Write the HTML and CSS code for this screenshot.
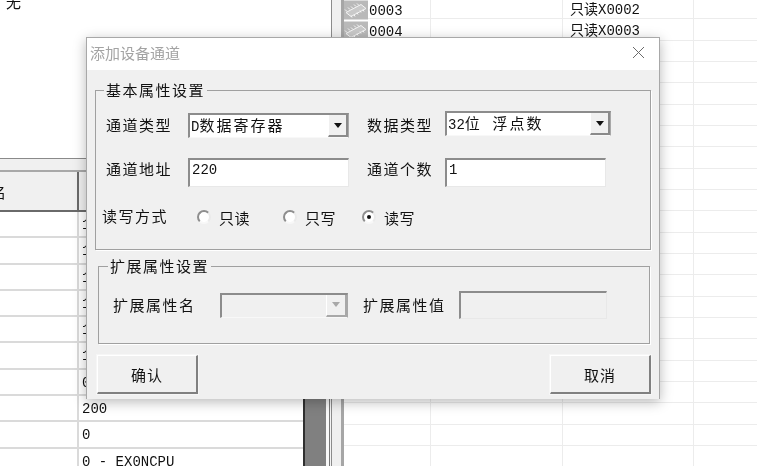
FILE: index.html
```html
<!DOCTYPE html>
<html lang="zh-CN">
<head>
<meta charset="utf-8">
<title>添加设备通道</title>
<link rel="stylesheet" href="styles.css">
</head>
<body>
<svg class="defs" width="0" height="0"><symbol id="chip" viewBox="0 0 24 19"><rect width="24" height="19" fill="#b9b9b9"/><path d="M2 12 17 4l5 4-15 8z" fill="#c9c9c9" stroke="#f4f4f4"/><path d="M1 9l2 2M4 7l2 2M7 6l2 2M10 4l2 2M13 3l2 2M8 17l-1-2M11 16l-1-2M14 14l-1-2M17 12l-1-2M20 11l-1-2" stroke="#f7f7f7" stroke-width="1" fill="none"/></symbol></svg>
<div class="app">
  <div class="left">
    <div class="top"><span class="top-text">无</span></div>
    <div class="bar"></div>
    <div class="lower">
      <div class="table">
        <div class="thead"><span class="th">名</span><span class="th-rest"></span></div>
        <div class="tr"><span class="td-a"></span><span class="td-b">1</span></div>
        <div class="tr"><span class="td-a"></span><span class="td-b">1</span></div>
        <div class="tr"><span class="td-a"></span><span class="td-b">1</span></div>
        <div class="tr"><span class="td-a"></span><span class="td-b">1</span></div>
        <div class="tr"><span class="td-a"></span><span class="td-b">1</span></div>
        <div class="tr"><span class="td-a"></span><span class="td-b">1</span></div>
        <div class="tr"><span class="td-a"></span><span class="td-b">0</span></div>
        <div class="tr"><span class="td-a"></span><span class="td-b">200</span></div>
        <div class="tr"><span class="td-a"></span><span class="td-b">0</span></div>
        <div class="tr"><span class="td-a"></span><span class="td-b">0 - EX0NCPU</span></div>
      </div>
      <div class="track"></div>
      <div class="track-edge"></div>
    </div>
  </div>
  <div class="divider"></div>
  <div class="right">
    <div class="row"><span class="c1"><svg class="chip"><use href="#chip"/></svg><span class="id">0003</span></span><span class="c2"></span><span class="c3">只读X0002</span><span class="c4"></span></div>
    <div class="row"><span class="c1"><svg class="chip"><use href="#chip"/></svg><span class="id">0004</span></span><span class="c2"></span><span class="c3">只读X0003</span><span class="c4"></span></div>
    <div class="row"><span class="c1"></span><span class="c2"></span><span class="c3"></span><span class="c4"></span></div>
    <div class="row"><span class="c1"></span><span class="c2"></span><span class="c3"></span><span class="c4"></span></div>
    <div class="row"><span class="c1"></span><span class="c2"></span><span class="c3"></span><span class="c4"></span></div>
    <div class="row"><span class="c1"></span><span class="c2"></span><span class="c3"></span><span class="c4"></span></div>
    <div class="row"><span class="c1"></span><span class="c2"></span><span class="c3"></span><span class="c4"></span></div>
    <div class="row"><span class="c1"></span><span class="c2"></span><span class="c3"></span><span class="c4"></span></div>
    <div class="row"><span class="c1"></span><span class="c2"></span><span class="c3"></span><span class="c4"></span></div>
    <div class="row"><span class="c1"></span><span class="c2"></span><span class="c3"></span><span class="c4"></span></div>
    <div class="row"><span class="c1"></span><span class="c2"></span><span class="c3"></span><span class="c4"></span></div>
    <div class="row"><span class="c1"></span><span class="c2"></span><span class="c3"></span><span class="c4"></span></div>
    <div class="row"><span class="c1"></span><span class="c2"></span><span class="c3"></span><span class="c4"></span></div>
    <div class="row"><span class="c1"></span><span class="c2"></span><span class="c3"></span><span class="c4"></span></div>
    <div class="row"><span class="c1"></span><span class="c2"></span><span class="c3"></span><span class="c4"></span></div>
    <div class="row"><span class="c1"></span><span class="c2"></span><span class="c3"></span><span class="c4"></span></div>
    <div class="row"><span class="c1"></span><span class="c2"></span><span class="c3"></span><span class="c4"></span></div>
    <div class="row"><span class="c1"></span><span class="c2"></span><span class="c3"></span><span class="c4"></span></div>
    <div class="row"><span class="c1"></span><span class="c2"></span><span class="c3"></span><span class="c4"></span></div>
    <div class="row"><span class="c1"></span><span class="c2"></span><span class="c3"></span><span class="c4"></span></div>
    <div class="row"><span class="c1"></span><span class="c2"></span><span class="c3"></span><span class="c4"></span></div>
    <div class="row"><span class="c1"></span><span class="c2"></span><span class="c3"></span><span class="c4"></span></div>
  </div>

  <div class="dialog">
    <div class="titlebar">
      <span class="title">添加设备通道</span>
      <svg class="close" width="13" height="13" viewBox="0 0 13 13"><path d="M1 1l11 11M12 1 1 12" stroke="#6a6a6a" stroke-width="1" fill="none"/></svg>
    </div>
    <div class="body">
      <fieldset class="group group-basic">
        <legend class="legend">基本属性设置</legend>
        <div class="grid grid-first">
          <span class="label">通道类型</span>
          <div class="combo combo-a"><span class="value"><span class="latin">D</span>数据寄存器</span><span class="arrow"><i class="tri"></i></span></div>
          <span class="label label-2">数据类型</span>
          <div class="combo combo-b"><span class="value"><span class="latin">32</span>位&nbsp; 浮点数</span><span class="arrow"><i class="tri"></i></span></div>
        </div>
        <div class="grid grid-second">
          <span class="label">通道地址</span>
          <div class="input input-a"><span class="latin">220</span></div>
          <span class="label label-2">通道个数</span>
          <div class="input input-b"><span class="latin">1</span></div>
        </div>
        <div class="mode">
          <span class="label mode-label">读写方式</span>
          <span class="opt opt-1"><i class="radio"></i>只读</span>
          <span class="opt opt-2"><i class="radio"></i>只写</span>
          <span class="opt opt-3"><i class="radio radio-on"></i>读写</span>
        </div>
      </fieldset>
      <fieldset class="group group-ext">
        <legend class="legend">扩展属性设置</legend>
        <div class="ext">
          <span class="label ext-label">扩展属性名</span>
          <div class="combo combo-off"><span class="value"></span><span class="arrow arrow-off"><i class="tri tri-off"></i></span></div>
          <span class="label ext-label-2">扩展属性值</span>
          <div class="input input-off"></div>
        </div>
      </fieldset>
      <div class="actions">
        <button class="btn" type="button">确认</button>
        <button class="btn" type="button">取消</button>
      </div>
    </div>
  </div>
</div>
</body>
</html>
```
FILE: styles.css
```css
* { box-sizing: border-box; }
html, body { margin: 0; padding: 0; }
body { background: #fff; overflow: hidden; }
.defs { position: absolute; }
.app {
  position: relative;
  display: flex;
  width: 757px;
  height: 466px;
  overflow: hidden;
  background: #fff;
  color: #111;
  font-family: "Liberation Mono", "Noto Sans CJK SC", monospace;
  font-size: 14px;
  filter: blur(0.3px);
}

/* Left window */
.left { width: 332px; flex: none; display: flex; flex-direction: column; }
.top { height: 158px; background: #fff; border-right: 1px solid #8c8c8c; overflow: hidden; }
.top-text { display: block; margin: -8px 0 0 6px; line-height: 20px; font-family: "Noto Sans CJK SC", sans-serif; font-size: 15px; }
.bar { height: 14px; background: #f0f0f0; border-top: 1px solid #8a8a8a; border-bottom: 2px solid #a8a8a8; }
.lower { flex: 1; display: flex; min-height: 0; }
.table { width: 303px; flex: none; }
.thead { height: 40px; display: flex; background: #f0f0f0; border-bottom: 2px solid #6a6a6a; }
.th { width: 79px; flex: none; border-right: 2px solid #6a6a6a; font-family: "Noto Sans CJK SC", sans-serif; font-size: 15px; line-height: 40px; text-indent: -9px; overflow: hidden; white-space: nowrap; }
.th-rest { flex: 1; }
.tr { height: 26.3px; display: flex; border-bottom: 2px solid #dadada; }
.td-a { width: 79px; flex: none; border-right: 2px solid #dadada; }
.td-b { flex: 1; padding-left: 3px; line-height: 26px; white-space: nowrap; }
.track { width: 23px; flex: none; background: #808080; border-left: 2px solid #303030; }
.track-edge { flex: 1; background: #f4f4f4; border-left: 3px solid #f8f8f8; border-right: 1px solid #8c8c8c; box-shadow: inset 1px 0 0 #777; }

.divider { width: 12px; flex: none; background: #f0f0f0; border-right: 3px solid #a6a6a6; }

/* Right list */
.right { flex: 1; min-width: 0; margin-top: -2px; }
.row { height: 21.33px; display: grid; grid-template-columns: 87px 132px 131px 1fr; border-bottom: 1px solid #ececec; }
.c1, .c2, .c3 { border-right: 1px solid #ececec; white-space: nowrap; }
.c1 { display: flex; align-items: center; gap: 1px; }
.c3 { padding-left: 7px; line-height: 24px; }
.id { margin-top: 1px; line-height: 20px; }
.chip { width: 24px; height: 20px; flex: none; }

/* Dialog */
.dialog {
  position: absolute;
  left: 86px;
  top: 37px;
  width: 574px;
  height: 362px;
  border: 1px solid #a8a8a8;
  border-bottom: 0;
  background: #f0f0f0;
  box-shadow: 0 3px 12px rgba(0, 0, 0, .28);
  display: flex;
  flex-direction: column;
}
.titlebar { height: 32px; flex: none; background: #fff; display: flex; align-items: center; justify-content: space-between; padding: 0 14px 3px 3px; }
.title { font-family: "Noto Sans CJK SC", sans-serif; font-size: 15px; color: #a3a3a3; }
.body { flex: 1; display: flex; flex-direction: column; font-family: "Liberation Mono", "Noto Sans CJK SC", monospace; }
.group { margin: 0; min-width: 0; border: 1px solid #a0a0a0; box-shadow: 1px 1px 0 #fff; }
.group-basic { margin: 10px 8px 0 8px; height: 170px; padding: 0 0 0 10px; }
.group-ext { margin: 6px 9px 0 11px; height: 88px; padding: 0; }
.legend { font-family: "Noto Sans CJK SC", sans-serif; font-size: 15px; letter-spacing: 1.5px; line-height: 20px; padding: 0 2px; margin-left: -2px; white-space: nowrap; }
.group-ext .legend { margin-left: 9px; }
.label { font-family: "Noto Sans CJK SC", sans-serif; font-size: 15px; letter-spacing: 1.5px; line-height: 20px; white-space: nowrap; }
.grid { display: grid; grid-template-columns: 82px 161px 96px 166px; align-items: center; }
.grid-first { margin-top: 11px; height: 27px; }
.grid-second { margin-top: 20px; height: 29px; }
.grid-second .label { margin-top: -7px; }
.label-2 { padding-left: 18px; }
.latin { font-family: "Liberation Mono", monospace; font-size: 14px; letter-spacing: 0; }

.combo {
  display: flex;
  align-items: stretch;
  height: 25px;
  border-top: 2px solid #8c8c8c;
  border-left: 2px solid #8c8c8c;
  border-right: 1px solid #a8a8a8;
  border-bottom: 1px solid #f8f8f8;
  background: #fff;
}
.combo-a { width: 161px; align-self: end; }
.combo-b { width: 166px; align-self: start; }
.value { flex: 1; padding-left: 1px; font-family: "Noto Sans CJK SC", sans-serif; font-size: 15px; letter-spacing: 2px; line-height: 20px; white-space: nowrap; }
.arrow { width: 20px; flex: none; display: flex; align-items: center; justify-content: center; background: #f0f0f0; border-left: 1px solid #fff; border-bottom: 2px solid #8a8a8a; border-right: 2px solid #8a8a8a; }
.tri { width: 0; height: 0; border-left: 4.5px solid transparent; border-right: 4.5px solid transparent; border-top: 5px solid #111; }

.input {
  height: 29px;
  border-top: 2px solid #8c8c8c;
  border-left: 2px solid #8c8c8c;
  border-right: 1px solid #e8e8e8;
  border-bottom: 1px solid #e8e8e8;
  background: #fff;
  padding-left: 2px;
  line-height: 21px;
}
.input-b { width: 161px; }

.mode { display: flex; align-items: center; margin-top: 19px; height: 22px; margin-left: -4px; }
.mode-label { width: 95px; flex: none; margin-top: -2px; }
.opt { display: flex; align-items: center; gap: 8px; font-family: "Noto Sans CJK SC", sans-serif; font-size: 15px; letter-spacing: .5px; white-space: nowrap; }
.opt-1 { width: 86px; }
.opt-2 { width: 79px; }
.radio { position: relative; width: 14px; height: 14px; flex: none; border-radius: 50%; background: #fff; border: 2px solid; border-color: #8e8e8e #eaeaea #f8f8f8 #8e8e8e; }
.radio-on::after { content: ""; position: absolute; left: 3px; top: 3px; width: 4px; height: 4px; border-radius: 50%; background: #111; }

.ext { display: flex; align-items: center; margin-top: 15px; padding-left: 14px; }
.ext-label { width: 107px; flex: none; }
.ext-label-2 { width: 96px; flex: none; margin-left: 15px; }
.combo-off { width: 128px; background: #f0f0f0; }
.arrow-off { width: 21px; border-left-color: #fff; border-bottom-color: #a8a8a8; border-right-color: #a8a8a8; }
.tri-off { border-top-color: #a8a8a8; }
.input-off { width: 148px; height: 28px; background: #f0f0f0; }

.actions { display: flex; justify-content: space-between; margin: 11px 8px 0 10px; }
.btn {
  width: 101px;
  height: 39px;
  padding: 0;
  background: #f0f0f0;
  color: #111;
  font-family: "Noto Sans CJK SC", sans-serif;
  font-size: 15px;
  letter-spacing: 1px;
  border-top: 1px solid #fff;
  border-left: 1px solid #fff;
  border-right: 2px solid #808080;
  border-bottom: 2px solid #808080;
  outline: 1px solid #f6f6f6;
}
```
